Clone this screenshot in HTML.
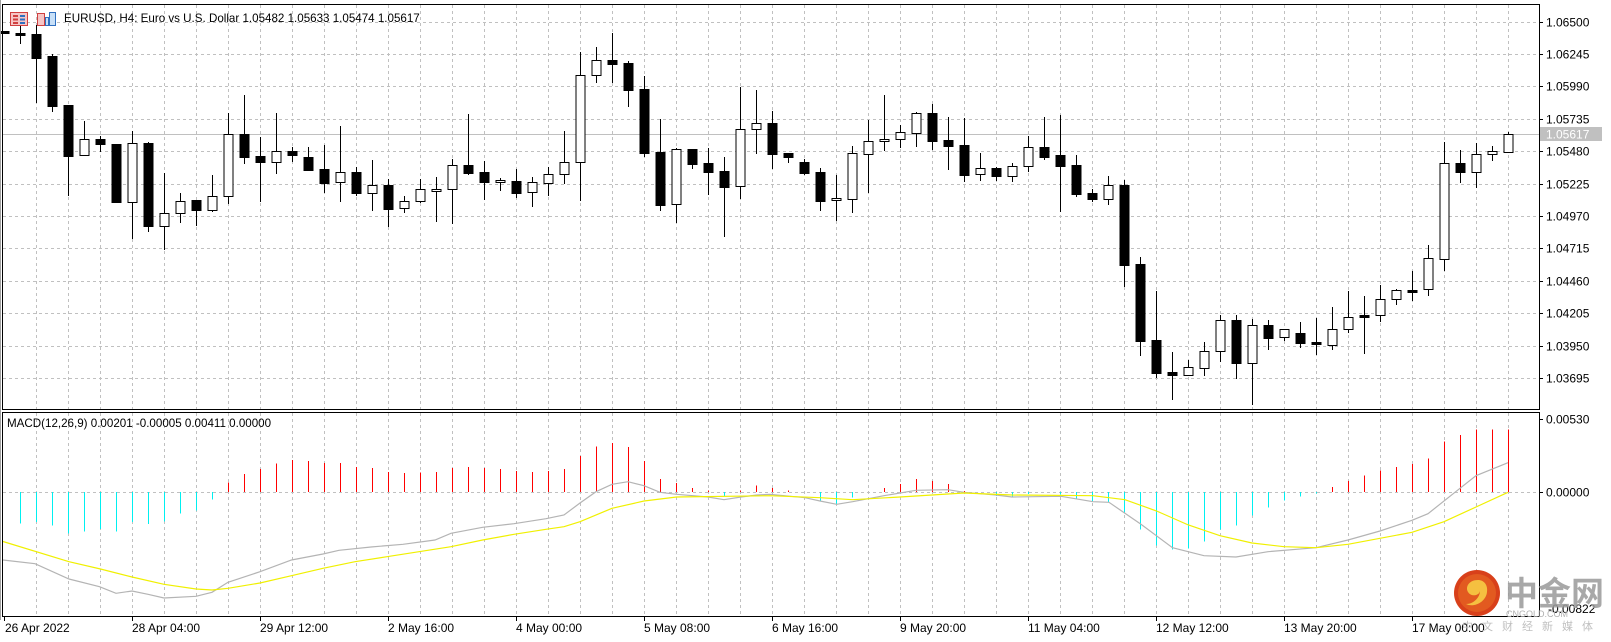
<!DOCTYPE html>
<html><head><meta charset="utf-8">
<style>
html,body{margin:0;padding:0;background:#fff;width:1611px;height:642px;overflow:hidden}
svg{display:block}
text{font-family:"Liberation Sans","Noto Sans CJK SC",sans-serif;font-size:12px;fill:#000}
</style></head>
<body>
<svg id="s" width="1611" height="642" viewBox="0 0 1611 642" xmlns="http://www.w3.org/2000/svg" shape-rendering="crispEdges">
<rect x="0" y="0" width="1611" height="642" fill="#fff"/>
<g id="grid"></g>
<line x1="2" y1="134.5" x2="1539" y2="134.5" stroke="#c0c0c0"/>
<g id="macd"></g>
<g id="candles"></g>
<rect x="2.5" y="4.5" width="1537" height="405" fill="none" stroke="#000"/>
<rect x="2.5" y="412.5" width="1537" height="204" fill="none" stroke="#000"/>
<line x1="0.5" y1="0" x2="0.5" y2="620" stroke="#a0a0a0"/>
<g id="axis"></g>
<g transform="translate(10,12)" shape-rendering="auto">
<rect x="0.5" y="0.5" width="17" height="13" fill="#f6c6c6" stroke="#d04040"/>
<rect x="3" y="3" width="5" height="2" fill="#d04040"/><rect x="10" y="3" width="5" height="2" fill="#3070c0"/>
<rect x="3" y="6.5" width="5" height="2" fill="#d04040"/><rect x="10" y="6.5" width="5" height="2" fill="#3070c0"/>
<rect x="3" y="10" width="5" height="2" fill="#d04040"/><rect x="10" y="10" width="5" height="2" fill="#3070c0"/>
</g>
<g transform="translate(37,11)" shape-rendering="auto">
<rect x="0.5" y="2.5" width="7" height="12" fill="#f6c6c6" stroke="#d04040"/>
<rect x="8.5" y="6.5" width="3" height="8" fill="#c8e0f8" stroke="#3070c0"/>
<rect x="12.5" y="1.5" width="6" height="13" fill="#c8e0f8" stroke="#3070c0"/>
</g>
<text x="64" y="22" style="font-size:11.6px">EURUSD, H4:  Euro vs U.S. Dollar   1.05482 1.05633 1.05474 1.05617</text>
<text x="7" y="427" style="font-size:11.6px">MACD(12,26,9) 0.00201 -0.00005 0.00411 0.00000</text>
<rect x="1540" y="127" width="62" height="14" fill="#c0c0c0"/>
<text x="1546" y="138.5" style="fill:#fff">1.05617</text>
<text x="1546" y="423.5">0.00530</text>
<text x="1546" y="496.5">0.00000</text>
<g id="time"></g>
<g shape-rendering="auto">
<circle cx="1477" cy="593" r="23" fill="#d8401a"/>
<circle cx="1477" cy="593" r="19" fill="#e25a20"/>
<path d="M1478 580 c-9 0 -13 7 -10 12 c3 5 11 4 12 -1 c0 6 -6 13 -14 13 c8 4 20 -2 21 -12 c1 -7 -3 -12 -9 -12z" fill="#f5c040"/>
<text x="1548" y="613" style="font-size:12px;fill:#000">-0.00822</text>
<text x="1505" y="605" style="font-size:33px;fill:#9a9a9a;opacity:0.85;font-family:'Noto Sans CJK SC',sans-serif;font-weight:bold">中金网</text>
<text x="1506" y="617" style="font-size:9px;fill:#b0b0b0">CNGOLD.COM</text>
<text x="1462" y="630" style="font-size:11px;fill:#c0c0c0;letter-spacing:9px;font-family:'Noto Sans CJK SC',sans-serif">中文财经新媒体</text>
</g>
</svg>
<script>
var NS="http://www.w3.org/2000/svg";
function el(p,t,a){var e=document.createElementNS(NS,t);for(var k in a)e.setAttribute(k,a[k]);document.getElementById(p).appendChild(e);return e;}
for(var x=36;x<=1508;x+=32){
 el('grid','line',{x1:x+.5,y1:5,x2:x+.5,y2:409,stroke:'#c0c0c0','stroke-dasharray':'3,3'});
 el('grid','line',{x1:x+.5,y1:413,x2:x+.5,y2:616,stroke:'#c0c0c0','stroke-dasharray':'3,3'});
}
var prices=["1.06500","1.06245","1.05990","1.05735","1.05480","1.05225","1.04970","1.04715","1.04460","1.04205","1.03950","1.03695"];
for(var k=0;k<12;k++){
 var y=Math.round(21.6+32.4*k)+.5;
 el('grid','line',{x1:3,y1:y,x2:1539,y2:y,stroke:'#c0c0c0','stroke-dasharray':'3,3'});
 el('axis','line',{x1:1539,y1:y,x2:1543,y2:y,stroke:'#000'});
 var t=el('axis','text',{x:1546,y:y+4});t.textContent=prices[k];
}
el('axis','line',{x1:1539,y1:419.5,x2:1543,y2:419.5,stroke:'#000'});
el('axis','line',{x1:1539,y1:492.5,x2:1543,y2:492.5,stroke:'#000'});
el('macd','line',{x1:3,y1:492.5,x2:1539,y2:492.5,stroke:'#c0c0c0','stroke-dasharray':'3,3'});
var tl=["26 Apr 2022","28 Apr 04:00","29 Apr 12:00","2 May 16:00","4 May 00:00","5 May 08:00","6 May 16:00","9 May 20:00","11 May 04:00","12 May 12:00","13 May 20:00","17 May 00:00"];
for(var i=0;i<12;i++){var xx=4+128*i;
 el('time','line',{x1:xx+.5,y1:617,x2:xx+.5,y2:621,stroke:'#000'});
 var t=el('time','text',{x:xx+(i==0?1:0),y:632});t.textContent=tl[i];}
var C=[[31,31,33,33,1],[25,33,35,43,1],[25,34,58,102,1],[54,56,106,111,1],[105,105,156,195,1],[121,139,155,155,0],[136,139,144,151,1],[144,144,202,202,1],[131,143,202,238,0],[142,143,226,231,1],
[173,213,226,249,0],[193,201,213,222,0],[200,200,210,225,1],[175,196,210,211,0],[113,134,196,203,0],[95,134,157,163,1],[137,156,162,201,1],[113,151,162,173,0],[147,151,155,161,1],[147,157,170,170,1],
[145,169,183,192,1],[126,172,182,201,0],[167,172,193,195,1],[160,185,193,210,0],[179,185,209,226,1],[196,201,208,212,0],[179,189,201,202,0],[177,189,190,221,0],[159,165,189,223,0],[114,165,173,174,1],
[161,172,182,199,1],[178,180,181,190,0],[169,181,193,197,1],[177,182,192,206,0],
[167,174,183,195,0],[131,162,174,183,0],[52,75,162,200,0],[47,60,75,82,0],[33,60,64,82,1],[61,63,90,106,1],[76,89,153,156,1],[119,152,205,210,1],[148,149,204,222,0],[149,149,164,168,1],
[148,163,172,194,1],[157,171,187,236,1],[87,129,186,198,0],[90,123,129,153,0],[111,123,154,168,1],[153,153,157,162,1],[159,162,173,174,1],[168,172,201,210,1],[175,198,200,220,0],[146,153,199,212,0],
[120,141,154,192,0],[95,139,141,150,0],[125,132,139,147,0],[112,113,133,146,0],[104,113,141,149,1],[117,140,146,169,1],[118,145,175,181,1],[153,168,174,180,0],[167,168,176,180,1],[163,166,176,181,0],
[136,147,166,171,0],[117,147,157,159,1],[115,155,166,211,1],
[155,165,194,196,1],[189,193,199,201,1],[176,185,199,204,0],[180,185,265,286,1],[257,264,341,355,1],[291,340,373,377,1],[352,372,375,399,1],[360,367,375,375,0],[342,351,368,375,0],[315,320,351,361,0],
[315,320,363,378,1],[319,325,363,404,0],[320,325,338,349,1],[329,329,337,340,0],[322,333,343,347,1],[318,342,344,354,1],[307,329,345,349,0],[291,317,329,332,0],[296,315,317,353,1],[285,299,315,321,0],
[289,290,299,304,0],[271,290,291,300,1],[245,258,289,295,0],[142,163,259,270,0],[150,163,172,182,1],[143,154,172,187,0],[146,151,154,160,0],[132,134,152,152,0]];
for(var i=0;i<C.length;i++){var c=C[i],cx=4+16*i+.5;
 el('candles','line',{x1:cx,y1:c[0],x2:cx,y2:c[3]+1,stroke:'#000'});
 var h=Math.max(c[2]-c[1],2);
 if(c[4]) el('candles','rect',{x:cx-5,y:c[1],width:10,height:h+1,fill:'#000'});
 else el('candles','rect',{x:cx-4.5,y:c[1]+.5,width:9,height:h,fill:'#fff',stroke:'#000'});
}
var H={1:523.7,2:522,3:525.7,4:533.7,5:531.7,6:529,7:531.7,8:522,9:524,10:521.7,11:513.7,12:510.3,13:499.7,14:482.3,15:474,16:469,17:463.3,18:460,19:461,20:463,21:463,22:467,23:468,24:472,25:473,26:472.7,27:472,28:468,29:467,30:468,31:469,32:471,33:472,34:471,35:469,36:456,37:446.3,38:443,39:447,40:461,41:479,42:483,43:488,44:490.7,45:496.7,46:490.7,47:485.7,48:488,49:490.3,51:501.7,52:504.3,53:497.7,55:488,56:484,57:479,58:481,59:484,60:491,62:496,63:497,64:494,66:494.5,67:499,68:501.7,69:502.7,70:512.7,71:529.7,72:545.3,73:549.3,74:548.7,75:541.7,76:529.7,77:525.7,78:515.7,79:507.7,80:500.3,81:496.7,82:493.7,83:487,84:481,85:475.7,86:470.7,87:467,88:464,89:458.7,90:441.7,91:435,92:429.7,93:429.7,94:429.7};
for(var k in H){var v=H[k],x=4+16*k+.5;
 el('macd','line',{x1:x,y1:492,x2:x,y2:v,stroke:v<492?'#ff0000':'#00f0f0'});}
var G=[[3,560],[35,563.7],[69,579],[99.5,586.7],[116,593.3],[132,591],[148,594.3],[164,598],[196,596.3],[212,592.3],[228,582.3],[260,571.7],[291.5,560],[323,554],[339,550.3],[371,547],[403,544.3],[435,540],[451,533.3],[482.6,527.3],[514,523.7],[546,518.7],[564,515],[580,503],[596,491.7],[612,484.3],[628,481.7],[644,485.7],[660,492.3],[676.6,494.3],[708,497],[724,499.7],[741,497],[757,495],[770,494.3],[805,497.7],[820,501],[836.7,504.3],[852.6,501.7],[884,495.7],[916,490.3],[948,489.7],[964,492.3],[996,495],[1012,497],[1061,496.3],[1093,501.7],[1109,502.3],[1140.6,524],[1172.5,547.7],[1204,555.7],[1236,557],[1268,551.7],[1316,547.7],[1348,540],[1380,531],[1412,520.3],[1428,513.7],[1460,488.3],[1476,475.7],[1508,462.7]];
var Y=[[3,541.5],[69,561.7],[100.5,569],[132,577],[164,584.3],[196,589],[212,590],[228,588.3],[260,583],[291.5,575.7],[323,568.3],[355,561.7],[387,556.7],[419,551.7],[451,546.7],[482.6,540],[514,534.3],[546,529.3],[564,526.7],[580,521.7],[612,508.3],[644,501],[676.6,497],[770,495.7],[820,497.7],[852.6,499.7],[900,497],[964,493],[1012,495],[1093,495.7],[1125,499.7],[1156.6,511],[1188.4,525],[1220,535.7],[1252,543],[1284,546.7],[1316,547.7],[1348,544.3],[1412,532.3],[1444,521.7],[1476,507],[1508,492.3]];
function pl(a,c){el('macd','polyline',{points:a.map(function(p){return p[0]+','+p[1]}).join(' '),fill:'none',stroke:c,'stroke-width':1.2,'shape-rendering':'auto'});}
pl(G,'#b4b4b4');pl(Y,'#f0f000');
</script>
</body></html>
